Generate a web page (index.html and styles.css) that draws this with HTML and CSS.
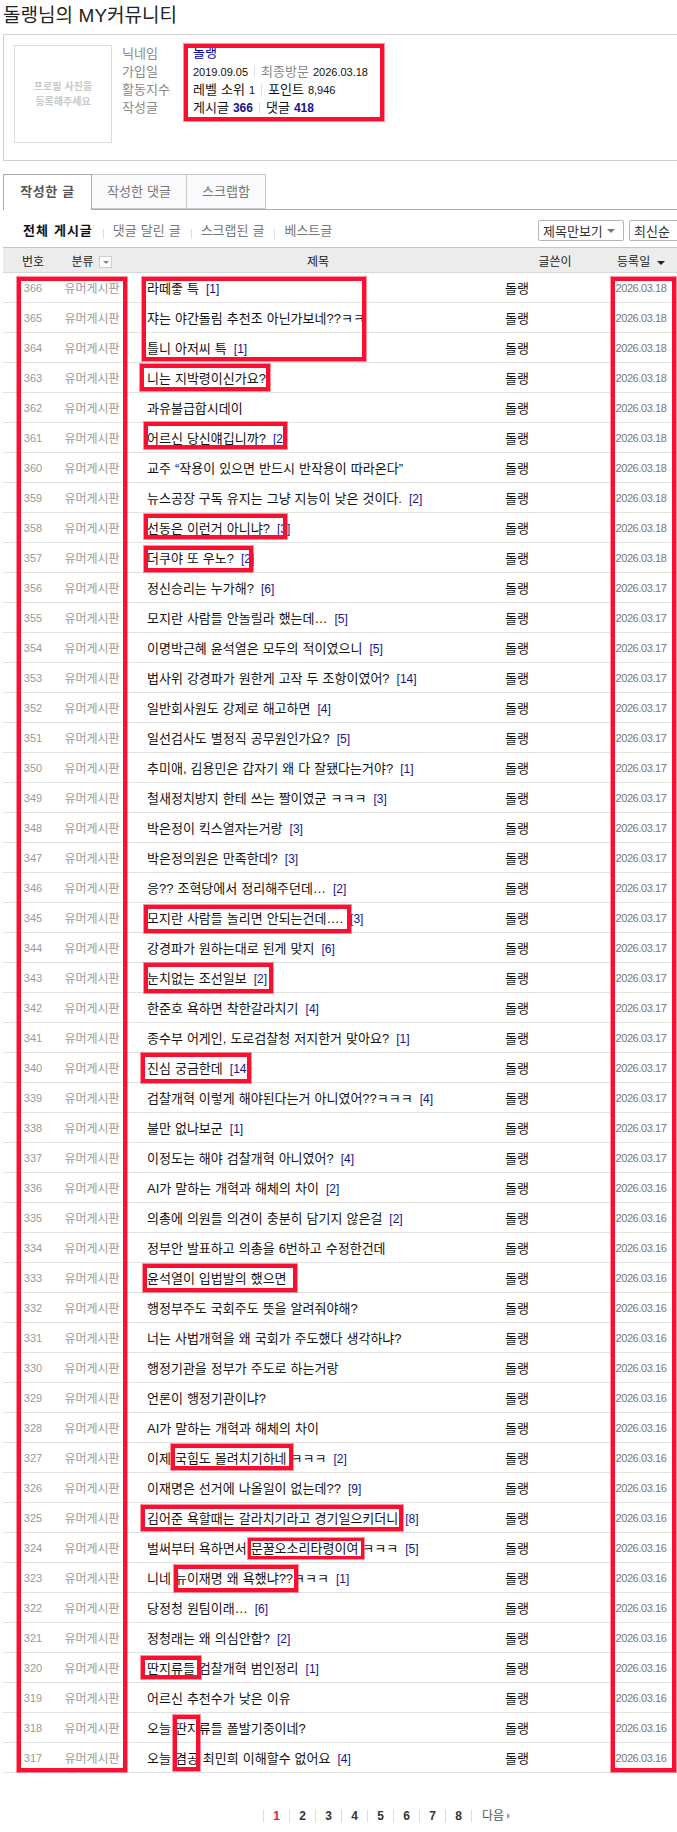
FILE: index.html
```html
<!DOCTYPE html>
<html lang="ko">
<head>
    <meta charset="UTF-8">
    <meta name="viewport" content="width=device-width, initial-scale=1.0">
    <title>돌랭님의 MY커뮤니티</title>
    <link rel="stylesheet" href="styles.css">
</head>
<body>
    <div class="page">
        <h1 class="page-title">돌랭님의 MY커뮤니티</h1>

        <div class="profile">
            <div class="profile-photo">프로필 사진을<br>등록해주세요</div>
            <dl class="profile-info">
                <dt>닉네임</dt>
                <dd><a class="nick" href="#">돌랭</a></dd>
                <dt>가입일</dt>
                <dd><span class="num">2019.09.05</span><span class="bar"></span><span class="muted">최종방문</span> <span class="num">2026.03.18</span></dd>
                <dt>활동지수</dt>
                <dd>레벨 소위 <span class="num">1</span><span class="bar"></span>포인트 <span class="num">8,946</span></dd>
                <dt>작성글</dt>
                <dd>게시글 <b class="stat">366</b><span class="bar"></span>댓글 <b class="stat">418</b></dd>
            </dl>
        </div>

        <ul class="tabs">
            <li class="tab active">작성한 글</li>
            <li class="tab">작성한 댓글</li>
            <li class="tab">스크랩함</li>
        </ul>

        <div class="filter">
            <ul class="filter-links">
                <li class="current">전체 게시글</li>
                <li>댓글 달린 글</li>
                <li>스크랩된 글</li>
                <li>베스트글</li>
            </ul>
            <div class="filter-selects">
                <div class="fake-select view-select">제목만보기<i class="caret"></i></div>
                <div class="fake-select order-select">최신순<i class="caret"></i></div>
            </div>
        </div>

        <table class="board">
            <colgroup>
                <col class="col-num">
                <col class="col-cat">
                <col class="col-title">
                <col class="col-writer">
                <col class="col-date">
            </colgroup>
            <thead>
                <tr>
                    <th>번호</th>
                    <th>분류 <i class="filter-btn"></i></th>
                    <th class="th-title">제목</th>
                    <th>글쓴이</th>
                    <th>등록일 <i class="sort-arrow"></i></th>
                </tr>
            </thead>
            <tbody>
                <tr><td>366</td><td>유머게시판</td><td>라떼좋 특 <a href="#">[1]</a></td><td>돌랭</td><td>2026.03.18</td></tr>
                <tr><td>365</td><td>유머게시판</td><td>쟈는 야간돌림 추천조 아닌가보네??ㅋㅋ</td><td>돌랭</td><td>2026.03.18</td></tr>
                <tr><td>364</td><td>유머게시판</td><td>틀니 아저씨 특 <a href="#">[1]</a></td><td>돌랭</td><td>2026.03.18</td></tr>
                <tr><td>363</td><td>유머게시판</td><td>니는 지박령이신가요?</td><td>돌랭</td><td>2026.03.18</td></tr>
                <tr><td>362</td><td>유머게시판</td><td>과유불급합시데이</td><td>돌랭</td><td>2026.03.18</td></tr>
                <tr><td>361</td><td>유머게시판</td><td>어르신 당신얘깁니까? <a href="#">[2]</a></td><td>돌랭</td><td>2026.03.18</td></tr>
                <tr><td>360</td><td>유머게시판</td><td>교주 “작용이 있으면 반드시 반작용이 따라온다”</td><td>돌랭</td><td>2026.03.18</td></tr>
                <tr><td>359</td><td>유머게시판</td><td>뉴스공장 구독 유지는 그냥 지능이 낮은 것이다. <a href="#">[2]</a></td><td>돌랭</td><td>2026.03.18</td></tr>
                <tr><td>358</td><td>유머게시판</td><td>선동은 이런거 아니냐? <a href="#">[3]</a></td><td>돌랭</td><td>2026.03.18</td></tr>
                <tr><td>357</td><td>유머게시판</td><td>더쿠야 또 우노? <a href="#">[2]</a></td><td>돌랭</td><td>2026.03.18</td></tr>
                <tr><td>356</td><td>유머게시판</td><td>정신승리는 누가해? <a href="#">[6]</a></td><td>돌랭</td><td>2026.03.17</td></tr>
                <tr><td>355</td><td>유머게시판</td><td>모지란 사람들 안놀릴라 했는데… <a href="#">[5]</a></td><td>돌랭</td><td>2026.03.17</td></tr>
                <tr><td>354</td><td>유머게시판</td><td>이명박근혜 윤석열은 모두의 적이였으니 <a href="#">[5]</a></td><td>돌랭</td><td>2026.03.17</td></tr>
                <tr><td>353</td><td>유머게시판</td><td>법사위 강경파가 원한게 고작 두 조항이였어? <a href="#">[14]</a></td><td>돌랭</td><td>2026.03.17</td></tr>
                <tr><td>352</td><td>유머게시판</td><td>일반회사원도 강제로 해고하면 <a href="#">[4]</a></td><td>돌랭</td><td>2026.03.17</td></tr>
                <tr><td>351</td><td>유머게시판</td><td>일선검사도 별정직 공무원인가요? <a href="#">[5]</a></td><td>돌랭</td><td>2026.03.17</td></tr>
                <tr><td>350</td><td>유머게시판</td><td>추미애, 김용민은 갑자기 왜 다 잘됐다는거야? <a href="#">[1]</a></td><td>돌랭</td><td>2026.03.17</td></tr>
                <tr><td>349</td><td>유머게시판</td><td>철새정치방지 한테 쓰는 짤이였군 ㅋㅋㅋ <a href="#">[3]</a></td><td>돌랭</td><td>2026.03.17</td></tr>
                <tr><td>348</td><td>유머게시판</td><td>박은정이 킥스열자는거랑 <a href="#">[3]</a></td><td>돌랭</td><td>2026.03.17</td></tr>
                <tr><td>347</td><td>유머게시판</td><td>박은정의원은 만족한데? <a href="#">[3]</a></td><td>돌랭</td><td>2026.03.17</td></tr>
                <tr><td>346</td><td>유머게시판</td><td>응?? 조혁당에서 정리해주던데… <a href="#">[2]</a></td><td>돌랭</td><td>2026.03.17</td></tr>
                <tr><td>345</td><td>유머게시판</td><td>모지란 사람들 놀리면 안되는건데…. <a href="#">[3]</a></td><td>돌랭</td><td>2026.03.17</td></tr>
                <tr><td>344</td><td>유머게시판</td><td>강경파가 원하는대로 된게 맞지 <a href="#">[6]</a></td><td>돌랭</td><td>2026.03.17</td></tr>
                <tr><td>343</td><td>유머게시판</td><td>눈치없는 조선일보 <a href="#">[2]</a></td><td>돌랭</td><td>2026.03.17</td></tr>
                <tr><td>342</td><td>유머게시판</td><td>한준호 욕하면 착한갈라치기 <a href="#">[4]</a></td><td>돌랭</td><td>2026.03.17</td></tr>
                <tr><td>341</td><td>유머게시판</td><td>종수부 어게인, 도로검찰청 저지한거 맞아요? <a href="#">[1]</a></td><td>돌랭</td><td>2026.03.17</td></tr>
                <tr><td>340</td><td>유머게시판</td><td>진심 궁금한데 <a href="#">[14]</a></td><td>돌랭</td><td>2026.03.17</td></tr>
                <tr><td>339</td><td>유머게시판</td><td>검찰개혁 이렇게 해야된다는거 아니였어??ㅋㅋㅋ <a href="#">[4]</a></td><td>돌랭</td><td>2026.03.17</td></tr>
                <tr><td>338</td><td>유머게시판</td><td>불만 없나보군 <a href="#">[1]</a></td><td>돌랭</td><td>2026.03.17</td></tr>
                <tr><td>337</td><td>유머게시판</td><td>이정도는 해야 검찰개혁 아니였어? <a href="#">[4]</a></td><td>돌랭</td><td>2026.03.17</td></tr>
                <tr><td>336</td><td>유머게시판</td><td>AI가 말하는 개혁과 해체의 차이 <a href="#">[2]</a></td><td>돌랭</td><td>2026.03.16</td></tr>
                <tr><td>335</td><td>유머게시판</td><td>의총에 의원들 의견이 충분히 담기지 않은걸 <a href="#">[2]</a></td><td>돌랭</td><td>2026.03.16</td></tr>
                <tr><td>334</td><td>유머게시판</td><td>정부안 발표하고 의총을 6번하고 수정한건데</td><td>돌랭</td><td>2026.03.16</td></tr>
                <tr><td>333</td><td>유머게시판</td><td>윤석열이 입법발의 했으면</td><td>돌랭</td><td>2026.03.16</td></tr>
                <tr><td>332</td><td>유머게시판</td><td>행정부주도 국회주도 뜻을 알려줘야해?</td><td>돌랭</td><td>2026.03.16</td></tr>
                <tr><td>331</td><td>유머게시판</td><td>너는 사법개혁을 왜 국회가 주도했다 생각하냐?</td><td>돌랭</td><td>2026.03.16</td></tr>
                <tr><td>330</td><td>유머게시판</td><td>행정기관을 정부가 주도로 하는거랑</td><td>돌랭</td><td>2026.03.16</td></tr>
                <tr><td>329</td><td>유머게시판</td><td>언론이 행정기관이냐?</td><td>돌랭</td><td>2026.03.16</td></tr>
                <tr><td>328</td><td>유머게시판</td><td>AI가 말하는 개혁과 해체의 차이</td><td>돌랭</td><td>2026.03.16</td></tr>
                <tr><td>327</td><td>유머게시판</td><td>이제 국힘도 몰려치기하네 ㅋㅋㅋ <a href="#">[2]</a></td><td>돌랭</td><td>2026.03.16</td></tr>
                <tr><td>326</td><td>유머게시판</td><td>이재명은 선거에 나올일이 없는데?? <a href="#">[9]</a></td><td>돌랭</td><td>2026.03.16</td></tr>
                <tr><td>325</td><td>유머게시판</td><td>김어준 욕할때는 갈라치기라고 경기일으키더니 <a href="#">[8]</a></td><td>돌랭</td><td>2026.03.16</td></tr>
                <tr><td>324</td><td>유머게시판</td><td>벌써부터 욕하면서 문꿀오소리타령이여 ㅋㅋㅋ <a href="#">[5]</a></td><td>돌랭</td><td>2026.03.16</td></tr>
                <tr><td>323</td><td>유머게시판</td><td>니네 뉴이재명 왜 욕했냐??ㅋㅋㅋ <a href="#">[1]</a></td><td>돌랭</td><td>2026.03.16</td></tr>
                <tr><td>322</td><td>유머게시판</td><td>당정청 원팀이래… <a href="#">[6]</a></td><td>돌랭</td><td>2026.03.16</td></tr>
                <tr><td>321</td><td>유머게시판</td><td>정청래는 왜 의심안함? <a href="#">[2]</a></td><td>돌랭</td><td>2026.03.16</td></tr>
                <tr><td>320</td><td>유머게시판</td><td>딴지류들 검찰개혁 범인정리 <a href="#">[1]</a></td><td>돌랭</td><td>2026.03.16</td></tr>
                <tr><td>319</td><td>유머게시판</td><td>어르신 추천수가 낮은 이유</td><td>돌랭</td><td>2026.03.16</td></tr>
                <tr><td>318</td><td>유머게시판</td><td>오늘 딴지류들 폴발기중이네?</td><td>돌랭</td><td>2026.03.16</td></tr>
                <tr><td>317</td><td>유머게시판</td><td>오늘 겸공 최민희 이해할수 없어요 <a href="#">[4]</a></td><td>돌랭</td><td>2026.03.16</td></tr>
            </tbody>
        </table>

        <div class="pager">
            <a class="current" href="#">1</a>
            <a href="#">2</a>
            <a href="#">3</a>
            <a href="#">4</a>
            <a href="#">5</a>
            <a href="#">6</a>
            <a href="#">7</a>
            <a href="#">8</a>
            <a class="next" href="#">다음<i class="next-arrow"></i></a>
        </div>

        <!-- red boxes drawn on top of the capture -->
        <div class="mark mark-info"></div>
        <div class="mark mark-cols"></div>
        <div class="mark mark-dates"></div>
        <div class="mark mark-366"></div>
        <div class="mark mark-363"></div>
        <div class="mark mark-361"></div>
        <div class="mark mark-358"></div>
        <div class="mark mark-357"></div>
        <div class="mark mark-345"></div>
        <div class="mark mark-343"></div>
        <div class="mark mark-340"></div>
        <div class="mark mark-333"></div>
        <div class="mark mark-327"></div>
        <div class="mark mark-325"></div>
        <div class="mark mark-324"></div>
        <div class="mark mark-323"></div>
        <div class="mark mark-320"></div>
        <div class="mark mark-318"></div>
    </div>
</body>
</html>
```

FILE: styles.css
```css
* {
    box-sizing: border-box;
}
body {
    margin: 0;
    background-color: white;
    color: #111;
    font-family: "Liberation Sans", "Noto Sans CJK KR", sans-serif;
    font-size: 13px;
    word-spacing: 0.4px;
}
a {
    text-decoration: none;
}
i {
    font-style: normal;
}
ul,
dl,
dd {
    margin: 0;
    padding: 0;
    list-style: none;
}
.page {
    position: relative;
    width: 677px;
    height: 1832px;
    padding-left: 3px;
    overflow: hidden;
}
.page-title {
    margin: 0;
    height: 34px;
    font-size: 19px;
    font-weight: 400;
    line-height: 31px;
    color: #222;
}

/* profile */
.profile {
    display: flex;
    width: 674px;
    height: 127px;
    border: 1px solid #cfcfd8;
    border-right: none;
    padding: 10px 0 0 10px;
}
.profile-photo {
    display: flex;
    align-items: center;
    justify-content: center;
    width: 98px;
    height: 98px;
    border: 1px solid #dcdcdc;
    color: #c8c8c8;
    font-size: 10px;
    font-weight: 700;
    line-height: 15px;
    text-align: center;
}
.profile-info {
    display: grid;
    grid-template-columns: 71px 1fr;
    grid-auto-rows: 18px;
    margin: 0 0 0 10px;
    line-height: 18px;
}
.profile-info dt {
    color: #8a8a8a;
}
.profile-info dd {
    color: #111;
}
.nick {
    position: relative;
    top: -1px;
    color: #0000a8;
}
.num {
    font-size: 11px;
}
.muted {
    color: #888;
}
.bar {
    display: inline-block;
    width: 1px;
    height: 11px;
    margin: 0 6px;
    background-color: #ddd;
    vertical-align: -1px;
}
.stat {
    color: #14148c;
    font-size: 12px;
}

/* tabs */
.tabs {
    display: flex;
    width: 674px;
    height: 36px;
    margin-top: 13px;
    border-bottom: 1px solid #aaa;
}
.tab {
    height: 35px;
    width: 95px;
    border: 1px solid #c8c8c8;
    border-left: none;
    background-color: #fafafc;
    color: #777;
    line-height: 33px;
    text-align: center;
}
.tab.active {
    width: 89px;
    height: 36px;
    border-color: #aaa;
    border-left: 1px solid #aaa;
    border-bottom: none;
    background-color: white;
    color: #555;
    font-weight: 700;
    letter-spacing: 0.5px;
}
.tab:last-child {
    width: 79px;
}

/* filter row */
.filter {
    display: flex;
    justify-content: space-between;
    width: 674px;
    height: 37px;
    padding: 10px 0 0 20px;
}
.filter-links {
    display: flex;
    color: #777;
    line-height: 22px;
}
.filter-links li + li {
    margin-left: 10px;
    padding-left: 10px;
    background: linear-gradient(#ddd, #ddd) left center / 1px 10px no-repeat;
}
.filter-links .current {
    color: #111;
    font-weight: 700;
    letter-spacing: 1px;
}
.filter-selects {
    display: flex;
    gap: 5px;
    margin-right: -22px;
}
.fake-select {
    display: flex;
    align-items: center;
    justify-content: space-between;
    height: 21px;
    border: 1px solid #b5b5b5;
    border-radius: 2px;
    padding: 0 8px 0 4px;
    color: #333;
}
.view-select {
    width: 86px;
}
.order-select {
    width: 70px;
}
.caret {
    width: 0;
    height: 0;
    border-left: 4px solid transparent;
    border-right: 4px solid transparent;
    border-top: 4px solid #777;
}

/* board */
.board {
    width: 674px;
    table-layout: fixed;
    border-collapse: collapse;
}
.col-num {
    width: 60px;
}
.col-cat {
    width: 58px;
}
.col-writer {
    width: 100px;
}
.col-date {
    width: 72px;
}
.board th {
    height: 25px;
    padding: 0;
    border-top: 1px solid #c4c4c4;
    border-bottom: 1px solid #d8d8d8;
    background-color: #ececec;
    color: #222;
    font-size: 12px;
    font-weight: 400;
    text-align: center;
}
.board .th-title {
    padding-left: 10px;
}
.filter-btn {
    display: inline-block;
    position: relative;
    width: 13px;
    height: 12px;
    margin-left: 2px;
    border: 1px solid #ccc;
    background-color: white;
    vertical-align: -2px;
}
.filter-btn::after {
    content: "";
    position: absolute;
    left: 3px;
    top: 4px;
    border-left: 3px solid transparent;
    border-right: 3px solid transparent;
    border-top: 3px solid #888;
}
.sort-arrow {
    display: inline-block;
    margin-left: 3px;
    border-left: 4px solid transparent;
    border-right: 4px solid transparent;
    border-top: 4px solid #222;
    vertical-align: 1px;
}
.board td {
    height: 30px;
    padding: 0;
    border-bottom: 1px solid #e2e2e2;
    color: #111;
    white-space: nowrap;
    overflow: hidden;
}
.board td:nth-child(1) {
    color: #999;
    font-size: 11px;
    text-align: center;
}
.board td:nth-child(2) {
    color: #999;
    font-size: 12px;
    text-align: center;
}
.board td:nth-child(3) {
    padding-left: 26px;
}
.board td:nth-child(3) a {
    margin-left: 3px;
    color: #14148c;
    font-size: 12px;
}
.board td:nth-child(5) {
    color: #777;
    font-size: 11px;
    letter-spacing: -0.4px;
    text-align: center;
}

/* pager */
.pager {
    display: flex;
    align-items: center;
    height: 14px;
    margin-top: 36px;
    padding-left: 260px;
    font-size: 12px;
}
.pager a {
    width: 26px;
    color: #333;
    font-weight: 700;
    line-height: 12px;
    text-align: center;
    border-left: 1px solid #ddd;
}
.pager .current {
    color: #d8263c;
}
.pager .next {
    display: flex;
    align-items: center;
    gap: 3px;
    width: auto;
    padding-left: 10px;
    color: #555;
    font-weight: 400;
}
.next-arrow {
    border-top: 3px solid transparent;
    border-bottom: 3px solid transparent;
    border-left: 3px solid #999;
}

/* red annotation boxes */
.mark {
    position: absolute;
    border: 4px solid #fa0f30;
    box-shadow: 0 0 0 1px rgba(250, 15, 48, 0.45);
}
.mark-info {
    left: 184px;
    top: 44px;
    width: 200px;
    height: 77px;
}
.mark-cols {
    left: 17px;
    top: 277px;
    width: 110px;
    height: 1495px;
}
.mark-dates {
    left: 611px;
    top: 277px;
    width: 65px;
    height: 1495px;
}
.mark-366 {
    left: 142px;
    top: 277px;
    width: 224px;
    height: 84px;
}
.mark-363 {
    left: 140px;
    top: 364px;
    width: 130px;
    height: 27px;
}
.mark-361 {
    left: 144px;
    top: 422px;
    width: 143px;
    height: 27px;
}
.mark-358 {
    left: 144px;
    top: 514px;
    width: 143px;
    height: 25px;
}
.mark-357 {
    left: 144px;
    top: 546px;
    width: 109px;
    height: 26px;
}
.mark-345 {
    left: 144px;
    top: 905px;
    width: 207px;
    height: 28px;
}
.mark-343 {
    left: 144px;
    top: 963px;
    width: 129px;
    height: 30px;
}
.mark-340 {
    left: 141px;
    top: 1053px;
    width: 110px;
    height: 30px;
}
.mark-333 {
    left: 143px;
    top: 1264px;
    width: 154px;
    height: 28px;
}
.mark-327 {
    left: 171px;
    top: 1444px;
    width: 122px;
    height: 26px;
}
.mark-325 {
    left: 141px;
    top: 1505px;
    width: 262px;
    height: 26px;
}
.mark-324 {
    left: 248px;
    top: 1538px;
    width: 116px;
    height: 21px;
    border-width: 3px;
}
.mark-323 {
    left: 174px;
    top: 1565px;
    width: 124px;
    height: 27px;
}
.mark-320 {
    left: 141px;
    top: 1656px;
    width: 60px;
    height: 23px;
}
.mark-318 {
    left: 173px;
    top: 1715px;
    width: 27px;
    height: 56px;
}
```
